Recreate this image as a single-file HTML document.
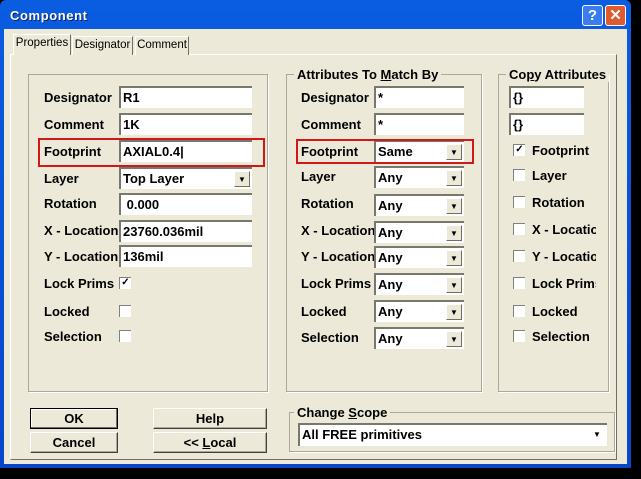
<!DOCTYPE html>
<html><head><style>
*{margin:0;padding:0;box-sizing:border-box}
body{width:641px;height:479px;background:#000;position:relative;overflow:hidden;font-family:"Liberation Sans",Arial,sans-serif;font-size:13px;font-weight:bold;color:#000}
.a{position:absolute}
.win{left:0;top:0;width:631px;height:468px;background:linear-gradient(#0a5ce0,#0848c8);border-radius:6px 6px 0 0}
.body{left:4px;top:29px;width:623px;height:435px;background:#ece9d8}
.title{left:10px;top:8px;color:#fff;font-size:13px;font-weight:bold;letter-spacing:.6px;text-shadow:1px 1px #0a246a}
.tb{width:21px;height:21px;top:5px;border:1px solid #fff;border-radius:3px;color:#fff;text-align:center;font-size:15px;line-height:19px}
.tab{top:36px;height:19px;border:1px solid #fff;border-right-color:#716f64;border-bottom:none;font-weight:normal;font-size:11.5px;line-height:17px;text-align:center;background:#ece9d8}
.panel{left:10px;top:54px;width:607px;height:406px;border:1px solid #fff;border-right-color:#716f64;border-bottom-color:#716f64}
.grp{border:1px solid #aca899;box-shadow:1px 1px 0 #fff}
.gt{background:#ece9d8;padding:0 3px;font-weight:bold}
.ed{background:#fff;border-top:2px solid #7a786c;border-left:2px solid #7a786c;height:22px;padding-left:2px;line-height:19px;font-weight:bold}
.dd{position:absolute;right:2px;top:2px;width:16px;height:16px;background:#ece9d8;border:1px solid #fff;border-right-color:#716f64;border-bottom-color:#716f64;font-size:8px;text-align:center;line-height:15px}
.lb{font-weight:bold}
.cb{width:12px;height:12px;background:#fff;border-top:1px solid #808080;border-left:1px solid #808080;font-size:10px;line-height:10px;text-align:center}
.red{border:2px solid #d01818}
.btn{height:21px;border:1px solid #fff;border-right-color:#404040;border-bottom-color:#404040;box-shadow:inset -1px -1px #aca899;text-align:center;line-height:19px;font-weight:bold}
</style></head><body>
<div class="a win"></div>
<div class="a body"></div>
<div class="a title">Component</div>
<div class="a tb" style="left:582px;background:#3b7cf0">?</div>
<div class="a tb" style="left:605px;background:#e05a30">✕</div>
<div class="a panel"></div>
<div class="a tab" style="left:13px;top:34px;height:21px;width:58px;border-bottom:none">Properties</div>
<div class="a tab" style="left:72px;width:61px">Designator</div>
<div class="a tab" style="left:135px;width:54px">Comment</div>

<div class="a grp" style="left:28px;top:74px;width:240px;height:318px"></div>
<div class="a grp" style="left:286px;top:74px;width:196px;height:318px"></div>
<div class="a gt" style="left:294px;top:67px">Attributes To <u>M</u>atch By</div>
<div class="a grp" style="left:498px;top:74px;width:111px;height:318px"></div>
<div class="a gt" style="left:506px;top:67px">Co<u>p</u>y Attributes</div>

<div class="a lb" style="left:44px;top:90px">Designator</div>
<div class="a lb" style="left:44px;top:117px">Comment</div>
<div class="a lb" style="left:44px;top:144px">Footprint</div>
<div class="a lb" style="left:44px;top:171px">Layer</div>
<div class="a lb" style="left:44px;top:196px">Rotation</div>
<div class="a lb" style="left:44px;top:223px">X - Location</div>
<div class="a lb" style="left:44px;top:249px">Y - Location</div>
<div class="a lb" style="left:44px;top:276px">Lock Prims</div>
<div class="a lb" style="left:44px;top:304px">Locked</div>
<div class="a lb" style="left:44px;top:329px">Selection</div>
<div class="a ed" style="left:119px;top:86px;width:133px">R1</div>
<div class="a ed" style="left:119px;top:113px;width:133px">1K</div>
<div class="a ed" style="left:119px;top:140px;width:133px">AXIAL0.4|</div>
<div class="a ed" style="left:119px;top:167px;width:133px">Top Layer<div class="dd">▼</div></div>
<div class="a ed" style="left:119px;top:193px;width:133px">&nbsp;0.000</div>
<div class="a ed" style="left:119px;top:220px;width:133px">23760.036mil</div>
<div class="a ed" style="left:119px;top:245px;width:133px">136mil</div>
<div class="a cb" style="left:119px;top:277px">✓</div>
<div class="a cb" style="left:119px;top:305px"></div>
<div class="a cb" style="left:119px;top:330px"></div>
<div class="a red" style="left:38px;top:138px;width:227px;height:29px"></div>

<div class="a lb" style="left:301px;top:90px">Designator</div>
<div class="a lb" style="left:301px;top:117px">Comment</div>
<div class="a lb" style="left:301px;top:144px">Footprint</div>
<div class="a lb" style="left:301px;top:169px">Layer</div>
<div class="a lb" style="left:301px;top:196px">Rotation</div>
<div class="a lb" style="left:301px;top:223px">X - Location</div>
<div class="a lb" style="left:301px;top:249px">Y - Location</div>
<div class="a lb" style="left:301px;top:276px">Lock Prims</div>
<div class="a lb" style="left:301px;top:304px">Locked</div>
<div class="a lb" style="left:301px;top:330px">Selection</div>
<div class="a ed" style="left:374px;top:86px;width:90px">*</div>
<div class="a ed" style="left:374px;top:113px;width:90px">*</div>
<div class="a ed" style="left:374px;top:140px;width:90px">Same<div class="dd">▼</div></div>
<div class="a ed" style="left:374px;top:166px;width:90px;background:#fff">Any<div class="dd">▼</div></div>
<div class="a ed" style="left:374px;top:194px;width:90px">Any<div class="dd">▼</div></div>
<div class="a ed" style="left:374px;top:221px;width:90px">Any<div class="dd">▼</div></div>
<div class="a ed" style="left:374px;top:246px;width:90px">Any<div class="dd">▼</div></div>
<div class="a ed" style="left:374px;top:273px;width:90px">Any<div class="dd">▼</div></div>
<div class="a ed" style="left:374px;top:300px;width:90px">Any<div class="dd">▼</div></div>
<div class="a ed" style="left:374px;top:327px;width:90px">Any<div class="dd">▼</div></div>
<div class="a red" style="left:296px;top:139px;width:178px;height:25px"></div>

<div class="a ed" style="left:509px;top:86px;width:75px">{}</div>
<div class="a ed" style="left:509px;top:113px;width:75px">{}</div>
<div class="a cb" style="left:513px;top:144px">✓</div><div class="a lb" style="left:532px;top:143px">Footprint</div>
<div class="a cb" style="left:513px;top:169px"></div><div class="a lb" style="left:532px;top:168px">Layer</div>
<div class="a cb" style="left:513px;top:196px"></div><div class="a lb" style="left:532px;top:195px">Rotation</div>
<div class="a cb" style="left:513px;top:223px"></div><div class="a lb" style="left:532px;top:222px;width:64px;overflow:hidden;white-space:nowrap">X - Location</div>
<div class="a cb" style="left:513px;top:250px"></div><div class="a lb" style="left:532px;top:249px;width:64px;overflow:hidden;white-space:nowrap">Y - Location</div>
<div class="a cb" style="left:513px;top:277px"></div><div class="a lb" style="left:532px;top:276px;width:64px;overflow:hidden;white-space:nowrap">Lock Prims</div>
<div class="a cb" style="left:513px;top:305px"></div><div class="a lb" style="left:532px;top:304px">Locked</div>
<div class="a cb" style="left:513px;top:330px"></div><div class="a lb" style="left:532px;top:329px">Selection</div>

<div class="a btn" style="left:30px;top:408px;width:88px;border:1px solid #000;box-shadow:inset -1px -1px #716f64,inset 1px 1px #fff">OK</div>
<div class="a btn" style="left:153px;top:408px;width:114px">Help</div>
<div class="a btn" style="left:30px;top:432px;width:88px">Cancel</div>
<div class="a btn" style="left:153px;top:432px;width:114px">&lt;&lt; <u>L</u>ocal</div>
<div class="a grp" style="left:289px;top:412px;width:326px;height:40px"></div>
<div class="a gt" style="left:294px;top:405px">Change <u>S</u>cope</div>
<div class="a ed" style="left:298px;top:423px;width:309px;height:23px">All FREE primitives<div class="dd" style="background:transparent;border:none">▼</div></div>
</body></html>
